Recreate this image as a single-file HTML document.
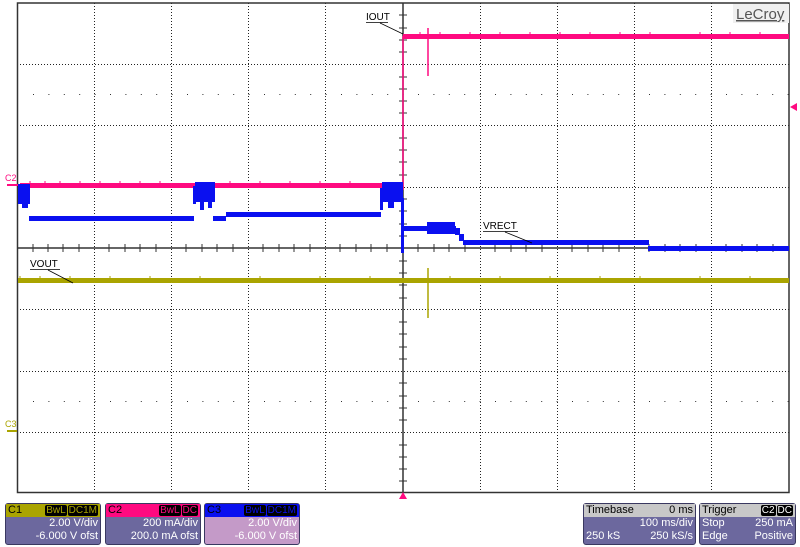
<!DOCTYPE html>
<html><head><style>
body{margin:0;width:800px;height:547px;background:#fff;overflow:hidden;font-family:"Liberation Sans",sans-serif;}
.p{position:absolute;top:503px;height:42px;background:#6c689e;border:1px solid #3a3860;border-radius:3px;color:#fff;font-size:11px;box-sizing:border-box;}
.h{height:13px;line-height:13px;padding:0 2px;position:relative;color:#000}
.r{text-align:right;padding-right:2px;line-height:13px;}
.b{position:absolute;right:2px;top:1px;font-size:10px;line-height:11px}
.b span{border-radius:2px;padding:0 1px;margin-left:1px}
</style></head><body>
<svg width="800" height="500" style="position:absolute;left:0;top:0" xmlns="http://www.w3.org/2000/svg">
<g stroke="#222" stroke-width="1" stroke-dasharray="1,2" fill="none">
<path d="M94.5 3V492M171.5 3V492M248.5 3V492M325.5 3V492M480.5 3V492M557.5 3V492M634.5 3V492M711.5 3V492"/>
<path d="M17 64.5H789M17 125.5H789M17 187.5H789M17 309.5H789M17 371.5H789M17 432.5H789"/>
</g>
<g stroke="#333" stroke-width="1" stroke-dasharray="1,14.4" fill="none">
<path d="M33 94.5H789M33 401.5H789"/>
</g>
<g stroke="#333" stroke-width="1.5" fill="none">
<path d="M17.5 3V492.5H789V3H17.5Z"/>
<path d="M403 3V492M17 248H789"/>
</g>
<g stroke="#333" stroke-width="1" fill="none">
<path d="M33 244V252M48 244V252M63 244V252M79 244V252M109 244V252M125 244V252M140 244V252M156 244V252M186 244V252M202 244V252M217 244V252M233 244V252M263 244V252M279 244V252M294 244V252M310 244V252M340 244V252M356 244V252M371 244V252M387 244V252M418 244V252M434 244V252M449 244V252M465 244V252M495 244V252M511 244V252M526 244V252M542 244V252M572 244V252M588 244V252M603 244V252M619 244V252M649 244V252M665 244V252M680 244V252M696 244V252M726 244V252M742 244V252M757 244V252M773 244V252"/>
<path d="M399 15H407M399 28H407M399 40H407M399 52H407M399 77H407M399 89H407M399 101H407M399 113H407M399 138H407M399 150H407M399 162H407M399 175H407M399 199H407M399 211H407M399 224H407M399 236H407M399 261H407M399 273H407M399 285H407M399 298H407M399 322H407M399 334H407M399 347H407M399 359H407M399 383H407M399 396H407M399 408H407M399 420H407M399 445H407M399 457H407M399 469H407M399 481H407"/>
</g>
<!-- yellow -->
<rect x="18" y="278" width="771" height="5" fill="#aaa400"/>
<path d="M428 268V318" stroke="#aaa400" stroke-width="1.5"/>
<path d="M20 276V278M40 276V278M70 276V278M110 276V278M150 276V278M200 276V278M260 276V278M320 276V278M370 276V278M450 276V278M500 276V278M550 276V278M600 276V278M640 276V278M700 276V278M750 276V278" stroke="#aaa400" stroke-width="1"/>
<!-- pink -->
<rect x="20" y="183" width="383" height="5" fill="#ff0a80"/>
<rect x="403" y="34" width="386" height="5" fill="#ff0a80"/>
<path d="M428 28V76M403 36V190" stroke="#ff0a80" stroke-width="1.5"/>
<path d="M30 181V183M45 181V183M60 181V183M80 181V183M100 181V183M120 181V183M140 181V183M160 181V183M230 181V183M260 181V183M290 181V183M320 181V183M350 181V183M420 32V34M440 32V34M470 32V34M500 32V34M530 32V34M560 32V34M590 32V34M620 32V34M650 32V34M700 32V34M730 32V34M760 32V34" stroke="#ff0a80" stroke-width="1"/>
<!-- blue -->
<g fill="#0a10f0">
<rect x="18" y="184" width="12" height="20"/>
<rect x="22" y="200" width="6" height="8"/>
<rect x="29" y="216" width="165" height="5"/>
<rect x="193" y="186" width="3" height="18"/>
<rect x="195" y="182" width="20" height="20"/>
<rect x="200" y="200" width="4" height="10"/>
<rect x="208" y="200" width="4" height="8"/>
<rect x="213" y="216" width="13" height="5"/>
<rect x="226" y="212" width="155" height="5"/>
<rect x="380" y="188" width="3" height="22"/>
<rect x="382" y="182" width="21" height="20"/>
<rect x="388" y="200" width="6" height="8"/>
<rect x="401" y="198" width="3" height="55"/>
<rect x="403" y="226" width="53" height="5"/>
<rect x="427" y="222" width="28" height="12"/>
<rect x="455" y="228" width="5" height="7"/>
<rect x="459" y="234" width="5" height="7"/>
<rect x="463" y="240" width="186" height="5"/>
<rect x="648" y="246" width="141" height="5"/>
</g>
<!-- labels -->
<g font-family="Liberation Sans" font-size="10" fill="#000">
<text x="366" y="20">IOUT</text><path d="M366 22.5H388M380 23L403 34" stroke="#000" stroke-width="0.8"/>
<text x="483" y="229">VRECT</text><path d="M483 231.5H518M505 232L532 243" stroke="#000" stroke-width="0.8"/>
<text x="30" y="267">VOUT</text><path d="M30 269.5H60M48 270L73 283" stroke="#000" stroke-width="0.8"/>
</g>
<text x="5" y="181" font-family="Liberation Sans" font-size="9" fill="#ff0a80">C2</text>
<rect x="7" y="184" width="11" height="2" fill="#ff0a80"/>
<text x="5" y="427" font-family="Liberation Sans" font-size="9" fill="#aaa400">C3</text>
<rect x="7" y="430" width="10" height="2" fill="#aaa400"/>
<rect x="733" y="4" width="56" height="19" fill="#f0f0f0"/>
<text x="736" y="19" font-family="Liberation Sans" font-size="15" fill="#555" text-decoration="underline">LeCroy</text>
<path d="M790 107L797 103V111Z" fill="#ff0a80"/>
<path d="M403 492L399 499H407Z" fill="#ff0a80"/>
</svg>
<div class="p" style="left:5px;width:96px"><div class="h" style="background:#aaa400">C1<div class="b"><span style="background:#000;color:#aaa400">BwL</span><span style="background:#000;color:#aaa400">DC1M</span></div></div><div class="r">2.00 V/div</div><div class="r">-6.000 V ofst</div></div>
<div class="p" style="left:105px;width:96px"><div class="h" style="background:#ff0a80">C2<div class="b"><span style="background:#000;color:#ff0a80">BwL</span><span style="background:#000;color:#ff0a80">DC</span></div></div><div class="r">200 mA/div</div><div class="r">200.0 mA ofst</div></div>
<div class="p" style="left:204px;width:96px;background:#c49ac8"><div class="h" style="background:#0a10f0">C3<div class="b"><span style="background:#000;color:#0a10f0">BwL</span><span style="background:#000;color:#0a10f0">DC1M</span></div></div><div class="r">2.00 V/div</div><div class="r">-6.000 V ofst</div></div>
<div class="p" style="left:583px;width:113px"><div class="h" style="background:#c8c8c8">Timebase<span style="position:absolute;right:2px">0 ms</span></div><div class="r">100 ms/div</div><div class="r" style="position:relative"><span style="position:absolute;left:2px">250 kS</span>250 kS/s</div></div>
<div class="p" style="left:699px;width:97px"><div class="h" style="background:#c8c8c8">Trigger<div class="b"><span style="background:#000;color:#fff">C2</span><span style="background:#000;color:#fff">DC</span></div></div><div class="r" style="position:relative"><span style="position:absolute;left:2px">Stop</span>250 mA</div><div class="r" style="position:relative"><span style="position:absolute;left:2px">Edge</span>Positive</div></div>
</body></html>
